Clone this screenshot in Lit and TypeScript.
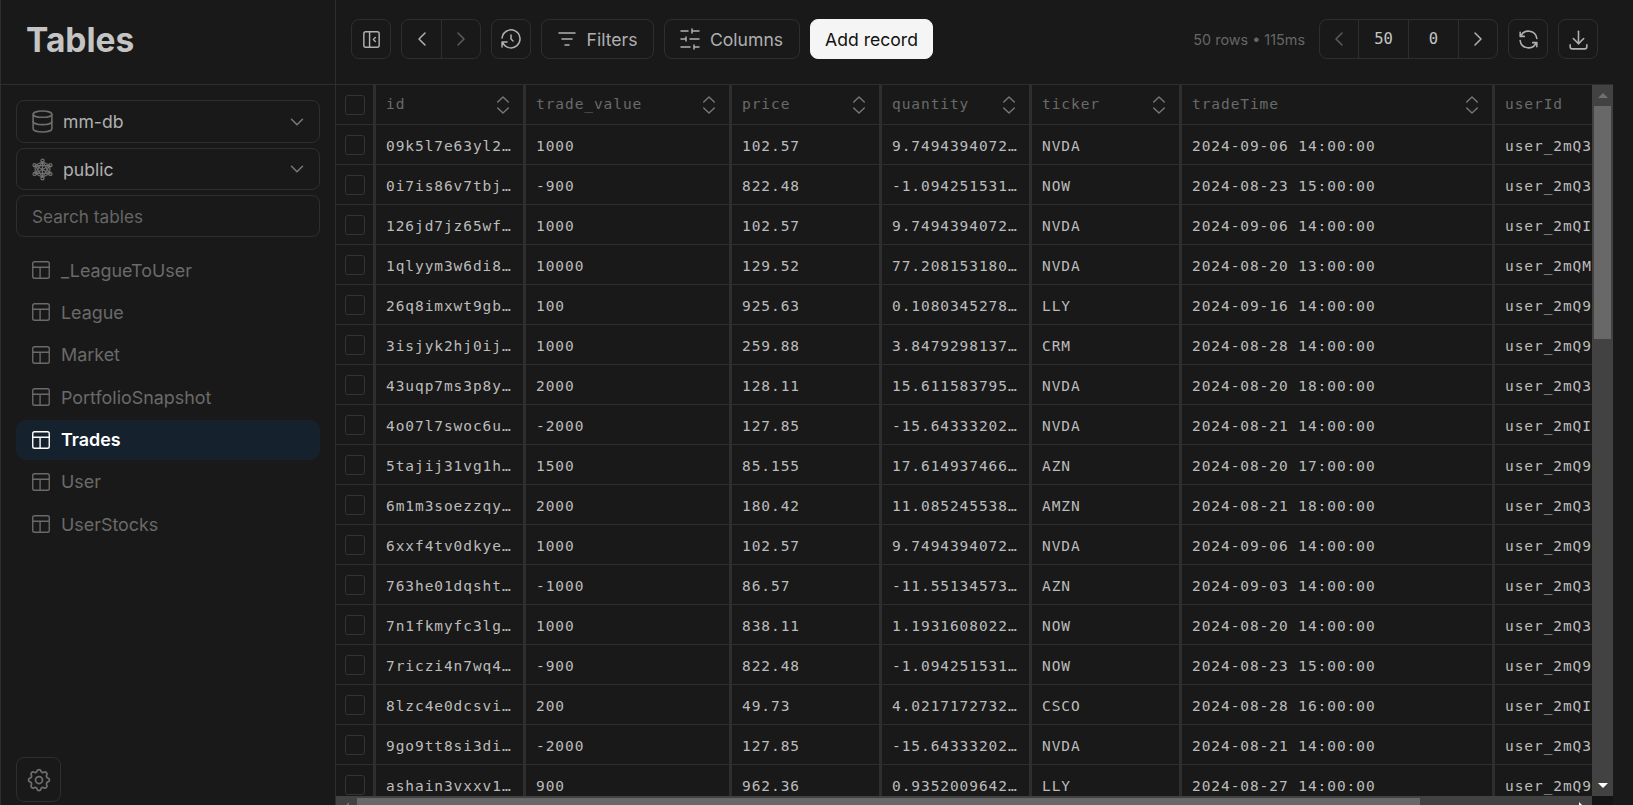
import { LitElement, html, css, svg } from "lit";
import { customElement } from "lit/decorators.js";

const ICONS: Record<string, any> = {
  database: svg`<ellipse cx="12" cy="5" rx="9" ry="3"/><path d="M3 5v14a9 3 0 0 0 18 0V5"/><path d="M3 12a9 3 0 0 0 18 0"/>`,
  schema: svg`<path d="M12 4.5 19 8.2v7.6L12 19.5 5 15.8V8.2z"/><path d="M12 4.5 19 15.8H5z"/><path d="M12 19.5 5 8.2h14z"/><path d="M12 4.5v15M5 8.2l14 7.6M19 8.2 5 15.8"/><circle cx="12" cy="3.6" r="1.5"/><circle cx="19.6" cy="7.8" r="1.5"/><circle cx="19.6" cy="16.2" r="1.5"/><circle cx="12" cy="20.4" r="1.5"/><circle cx="4.4" cy="16.2" r="1.5"/><circle cx="4.4" cy="7.8" r="1.5"/>`,
  chevDown: svg`<path d="M6 9l6 6 6-6"/>`,
  chevLeft: svg`<path d="M15 6l-6 6 6 6"/>`,
  chevRight: svg`<path d="M9 6l6 6-6 6"/>`,
  table: svg`<rect x="3" y="3" width="18" height="18" rx="2"/><path d="M3 9h18M11 9v12"/>`,
  settings: svg`<path d="M10.325 4.317c.426 -1.756 2.924 -1.756 3.35 0a1.724 1.724 0 0 0 2.573 1.066c1.543 -.94 3.31 .826 2.37 2.37a1.724 1.724 0 0 0 1.065 2.572c1.756 .426 1.756 2.924 0 3.35a1.724 1.724 0 0 0 -1.066 2.573c.94 1.543 -.826 3.31 -2.37 2.37a1.724 1.724 0 0 0 -2.572 1.065c-.426 1.756 -2.924 1.756 -3.35 0a1.724 1.724 0 0 0 -2.573 -1.066c-1.543 .94 -3.31 -.826 -2.37 -2.37a1.724 1.724 0 0 0 -1.065 -2.572c-1.756 -.426 -1.756 -2.924 0 -3.35a1.724 1.724 0 0 0 1.066 -2.573c-.94 -1.543 .826 -3.31 2.37 -2.37c1 .608 2.296 .07 2.572 -1.065z"/><circle cx="12" cy="12" r="3"/>`,
  collapse: svg`<path d="M4 6a2 2 0 0 1 2-2h12a2 2 0 0 1 2 2v12a2 2 0 0 1-2 2H6a2 2 0 0 1-2-2z"/><path d="M10 4v16"/><path d="M16 10l-2 2 2 2"/>`,
  history: svg`<path d="M12 8v4l2 2"/><path d="M3.05 11a9 9 0 1 1 .5 4m-.5 5v-5h5"/>`,
  filter: svg`<path d="M4 6h16M7 12h10M10 18h4"/>`,
  sliders: svg`<path d="M21 4h-7M10 4H3M21 12h-9M8 12H3M21 20h-5M12 20H3M14 2v4M8 10v4M16 18v4"/>`,
  refresh: svg`<path d="M20 11a8.1 8.1 0 0 0-15.5-2m-.5-4v4h4"/><path d="M4 13a8.1 8.1 0 0 0 15.5 2m.5 4v-4h-4"/>`,
  download: svg`<path d="M4 17v2a2 2 0 0 0 2 2h12a2 2 0 0 0 2-2v-2"/><path d="M7 11l5 5 5-5"/><path d="M12 4v12"/>`,
  selector: svg`<path d="M6.7 9l5.3-5 5.3 5"/><path d="M17.3 15l-5.3 5-5.3-5"/>`,
};

const icon = (name: string, cls = "") =>
  html`<svg class="ic ${cls}" viewBox="0 0 24 24" fill="none" stroke="currentColor" stroke-linecap="round" stroke-linejoin="round">${ICONS[name]}</svg>`;

const TABLES = ["_LeagueToUser", "League", "Market", "PortfolioSnapshot", "Trades", "User", "UserStocks"];
const COLUMNS = ["id", "trade_value", "price", "quantity", "ticker", "tradeTime", "userId"];
const ROWS: string[][] = [
  ["09k5l7e63yl2abc", "1000", "102.57", "9.749439407234", "NVDA", "2024-09-06 14:00:00", "user_2mQ3"],
  ["0i7is86v7tbjabc", "-900", "822.48", "-1.09425153123", "NOW", "2024-08-23 15:00:00", "user_2mQ3"],
  ["126jd7jz65wfabc", "1000", "102.57", "9.749439407234", "NVDA", "2024-09-06 14:00:00", "user_2mQI"],
  ["1qlyym3w6di8abc", "10000", "129.52", "77.20815318012", "NVDA", "2024-08-20 13:00:00", "user_2mQM"],
  ["26q8imxwt9gbabc", "100", "925.63", "0.108034527812", "LLY", "2024-09-16 14:00:00", "user_2mQ9"],
  ["3isjyk2hj0ijabc", "1000", "259.88", "3.847929813712", "CRM", "2024-08-28 14:00:00", "user_2mQ9"],
  ["43uqp7ms3p8yabc", "2000", "128.11", "15.61158379512", "NVDA", "2024-08-20 18:00:00", "user_2mQ3"],
  ["4o07l7swoc6uabc", "-2000", "127.85", "-15.6433320212", "NVDA", "2024-08-21 14:00:00", "user_2mQI"],
  ["5tajij31vg1habc", "1500", "85.155", "17.61493746612", "AZN", "2024-08-20 17:00:00", "user_2mQ9"],
  ["6m1m3soezzqyabc", "2000", "180.42", "11.08524553812", "AMZN", "2024-08-21 18:00:00", "user_2mQ3"],
  ["6xxf4tv0dkyeabc", "1000", "102.57", "9.749439407234", "NVDA", "2024-09-06 14:00:00", "user_2mQ9"],
  ["763he01dqshtabc", "-1000", "86.57", "-11.5513457312", "AZN", "2024-09-03 14:00:00", "user_2mQ3"],
  ["7n1fkmyfc3lgabc", "1000", "838.11", "1.193160802212", "NOW", "2024-08-20 14:00:00", "user_2mQ3"],
  ["7riczi4n7wq4abc", "-900", "822.48", "-1.09425153123", "NOW", "2024-08-23 15:00:00", "user_2mQ9"],
  ["8lzc4e0dcsviabc", "200", "49.73", "4.021717273212", "CSCO", "2024-08-28 16:00:00", "user_2mQI"],
  ["9go9tt8si3diabc", "-2000", "127.85", "-15.6433320212", "NVDA", "2024-08-21 14:00:00", "user_2mQ3"],
  ["ashain3vxxv1abc", "900", "962.36", "0.935200964212", "LLY", "2024-08-27 14:00:00", "user_2mQ9"],
];
const TOTAL_ROWS = 50;
const ROW_H = 40;
const VIEW_W = 1256;
const VIEW_H = 711;
const SHEET_W = 1434;
const SHEET_H = (TOTAL_ROWS + 1) * ROW_H;
const BAR = 21;

@customElement("app-root")
export class AppRoot extends LitElement {
  static styles = css`
    :host {
      display: flex;
      height: 100vh;
      overflow: hidden;
      background: #191919;
      color: #b8b8b8;
      font-family: Inter, "Noto Sans", sans-serif;
      font-size: 17.6px;
    }
    * { box-sizing: border-box; }
    .ic { width: 24px; height: 24px; stroke-width: 1.5; flex: none; display: block; }

    .side {
      width: 336px;
      flex: none;
      display: flex;
      flex-direction: column;
      border-left: 1px solid #2e2e2e;
      border-right: 1px solid #2e2e2e;
    }
    .side-head {
      height: 85px;
      flex: none;
      border-bottom: 1px solid #2e2e2e;
      display: flex;
      align-items: center;
      padding-left: 25px;
      padding-bottom: 5px;
    }
    h1 { margin: 0; font-size: 33.5px; font-weight: 700; color: #c4c4c4; }
    .side-body {
      flex: 1;
      display: flex;
      flex-direction: column;
      padding: 15px 15px 3px 15px;
      min-height: 0;
    }
    .box {
      height: 42px;
      flex: none;
      border: 1px solid #2e2e2e;
      border-radius: 8px;
      display: flex;
      align-items: center;
      padding: 0 11px 0 13px;
      margin-bottom: 5px;
      color: #b0b0b0;
    }
    .box:first-child { height: 43px; }
    .box .ic { color: #6e6e6e; width: 25px; height: 25px; margin-right: 8px; }
    .box .ic.schema { stroke-width: 1.2; }
    .box .label { flex: 1; }
    .box .ic.chev { margin: 0; color: #777; width: 22px; height: 22px; stroke-width: 1.7; }
    .search { color: #666; padding-left: 15px; font-size: 17.2px; }
    .list { display: flex; flex-direction: column; gap: 2.4px; margin-top: 8px; }
    .item {
      height: 40px;
      display: flex;
      align-items: center;
      gap: 9px;
      padding-left: 14px;
      border-radius: 9px;
      color: #6a6a6a;
      font-size: 17.9px;
    }
    .item .ic { width: 22px; height: 22px; }
    .item.active { background: #15222e; color: #fff; font-weight: 600; }
    .side-foot { margin-top: auto; }
    .gear {
      width: 45px;
      height: 45px;
      border: 1px solid #2e2e2e;
      border-radius: 8px;
      display: flex;
      align-items: center;
      justify-content: center;
      color: #6e6e6e;
    }
    .gear .ic { width: 28px; height: 28px; }

    .main { flex: 1; min-width: 0; display: flex; flex-direction: column; padding-right: 20px; }
    .bar {
      height: 84px;
      flex: none;
      display: flex;
      align-items: center;
      gap: 10px;
      padding: 0 15px 6px;
    }
    .btn {
      height: 40px;
      border: 1px solid #2e2e2e;
      border-radius: 8px;
      display: flex;
      align-items: center;
      justify-content: center;
      color: #b0b0b0;
      flex: none;
    }
    .btn.square { width: 40px; }
    .btn.text { gap: 8px; padding-right: 3px; }
    .btn.filters { width: 113px; }
    .btn.columns { width: 136px; }
    .btn.add { width: 123px; background: #f5f5f5; border-color: #f5f5f5; color: #111; }
    .btn.lg .ic { width: 25px; height: 25px; }
    .btn.sm .ic { width: 23px; height: 23px; }
    .group { display: flex; height: 40px; border: 1px solid #2e2e2e; border-radius: 8px; flex: none; }
    .group > div {
      display: flex;
      align-items: center;
      justify-content: center;
      border-left: 1px solid #2e2e2e;
      color: #b0b0b0;
    }
    .group > div:first-child { border-left: 0; }
    .group .s38 { width: 38px; }
    .group .s39 { width: 39px; }
    .group .s50 { width: 50px; font-family: "DejaVu Sans Mono", monospace; font-size: 15.5px; color: #c4c4c4; }
    .group > div.dim { color: #5c5c5c; }
    .spacer { flex: 1; }
    .stat { font-size: 14.4px; color: #666; white-space: nowrap; margin-right: 4px; }

    .table {
      flex: none;
      height: 733px;
      border-top: 1px solid #2e2e2e;
      display: grid;
      grid-template-columns: minmax(0, 1fr) 21px;
      grid-template-rows: minmax(0, 1fr) 21px;
    }
    .view {
      overflow: hidden;
      font-family: "DejaVu Sans Mono", monospace;
      font-size: 14.5px;
      letter-spacing: 0.93px;
    }
    .sbar { background: #424242; display: flex; }
    .sbar.v { flex-direction: column; }
    .track { flex: 1; min-width: 0; min-height: 0; }
    .thumb { background: #686868; }
    .v .thumb { margin: 0 2px; }
    .h .thumb { margin: 2px 0; height: 17px; }
    .arrow { width: 21px; height: 21px; flex: none; display: flex; align-items: center; justify-content: center; }
    .tri { width: 0; height: 0; border-style: solid; border-color: transparent; }
    .tri.up { border-width: 0 5px 5px; border-bottom-color: #707070; }
    .tri.down { border-width: 5px 5px 0; border-top-color: #fff; }
    .tri.left { border-width: 5px 5px 5px 0; border-right-color: #707070; }
    .tri.right { border-width: 5px 0 5px 5px; border-left-color: #fff; }
    .corner { background: #141414; }

    .sheet { width: 1434px; }
    .row { display: grid; grid-template-columns: 40px 150px 206px 150px 150px 150px 313px 275px; height: 40px; }
    .cell {
      border-right: 3px solid #2e2e2e;
      border-bottom: 1px solid #2e2e2e;
      padding: 0 10px;
      line-height: 42px;
      overflow: hidden;
      white-space: nowrap;
      text-overflow: ellipsis;
      color: #bcbcbc;
    }
    .row .cell.check { padding: 0; display: flex; align-items: center; justify-content: center; }
    .cb { width: 20px; height: 20px; border: 1px solid #333; border-radius: 3px; }
    .head .cell { display: flex; align-items: center; justify-content: space-between; color: #6a6a6a; padding-right: 8px; line-height: 1; }
    .head .cell .ic { color: #787878; stroke-width: 1.4; }
  `;

  render() {
    const vTrack = VIEW_H - 2 * BAR;
    const hTrack = VIEW_W - 2 * BAR;
    const vThumb = (VIEW_H / SHEET_H) * vTrack;
    const hThumb = (VIEW_W / SHEET_W) * hTrack;
    return html`
      <aside class="side">
        <div class="side-head"><h1>Tables</h1></div>
        <div class="side-body">
          <div class="box">${icon("database")}<span class="label">mm-db</span>${icon("chevDown", "chev")}</div>
          <div class="box">${icon("schema", "schema")}<span class="label">public</span>${icon("chevDown", "chev")}</div>
          <div class="box search">Search tables</div>
          <nav class="list">
            ${TABLES.map(
              (t) => html`<div class="item ${t === "Trades" ? "active" : ""}">${icon("table")}<span>${t}</span></div>`
            )}
          </nav>
          <div class="side-foot"><div class="gear">${icon("settings")}</div></div>
        </div>
      </aside>
      <section class="main">
        <header class="bar">
          <div class="btn square sm">${icon("collapse")}</div>
          <div class="group">
            <div class="s39">${icon("chevLeft")}</div>
            <div class="s39 dim">${icon("chevRight")}</div>
          </div>
          <div class="btn square">${icon("history")}</div>
          <div class="btn text filters">${icon("filter")}<span>Filters</span></div>
          <div class="btn text columns">${icon("sliders")}<span>Columns</span></div>
          <div class="btn add">Add record</div>
          <div class="spacer"></div>
          <span class="stat">50 rows • 115ms</span>
          <div class="group">
            <div class="s38 dim">${icon("chevLeft")}</div>
            <div class="s50">50</div>
            <div class="s50">0</div>
            <div class="s39">${icon("chevRight")}</div>
          </div>
          <div class="btn square lg">${icon("refresh")}</div>
          <div class="btn square lg">${icon("download")}</div>
        </header>
        <div class="table">
          <div class="view">
            <div class="sheet">
              <div class="row head">
                <div class="cell check"><div class="cb"></div></div>
                ${COLUMNS.map((c) => html`<div class="cell"><span>${c}</span>${icon("selector")}</div>`)}
              </div>
              ${ROWS.map(
                (r) => html`<div class="row">
                  <div class="cell check"><div class="cb"></div></div>
                  ${r.map((v) => html`<div class="cell">${v}</div>`)}
                </div>`
              )}
            </div>
          </div>
          <div class="sbar v">
            <div class="arrow"><div class="tri up"></div></div>
            <div class="track"><div class="thumb" style="height:${vThumb}px"></div></div>
            <div class="arrow"><div class="tri down"></div></div>
          </div>
          <div class="sbar h">
            <div class="arrow"><div class="tri left"></div></div>
            <div class="track"><div class="thumb" style="width:${hThumb}px"></div></div>
            <div class="arrow"><div class="tri right"></div></div>
          </div>
          <div class="corner"></div>
        </div>
      </section>
    `;
  }
}
